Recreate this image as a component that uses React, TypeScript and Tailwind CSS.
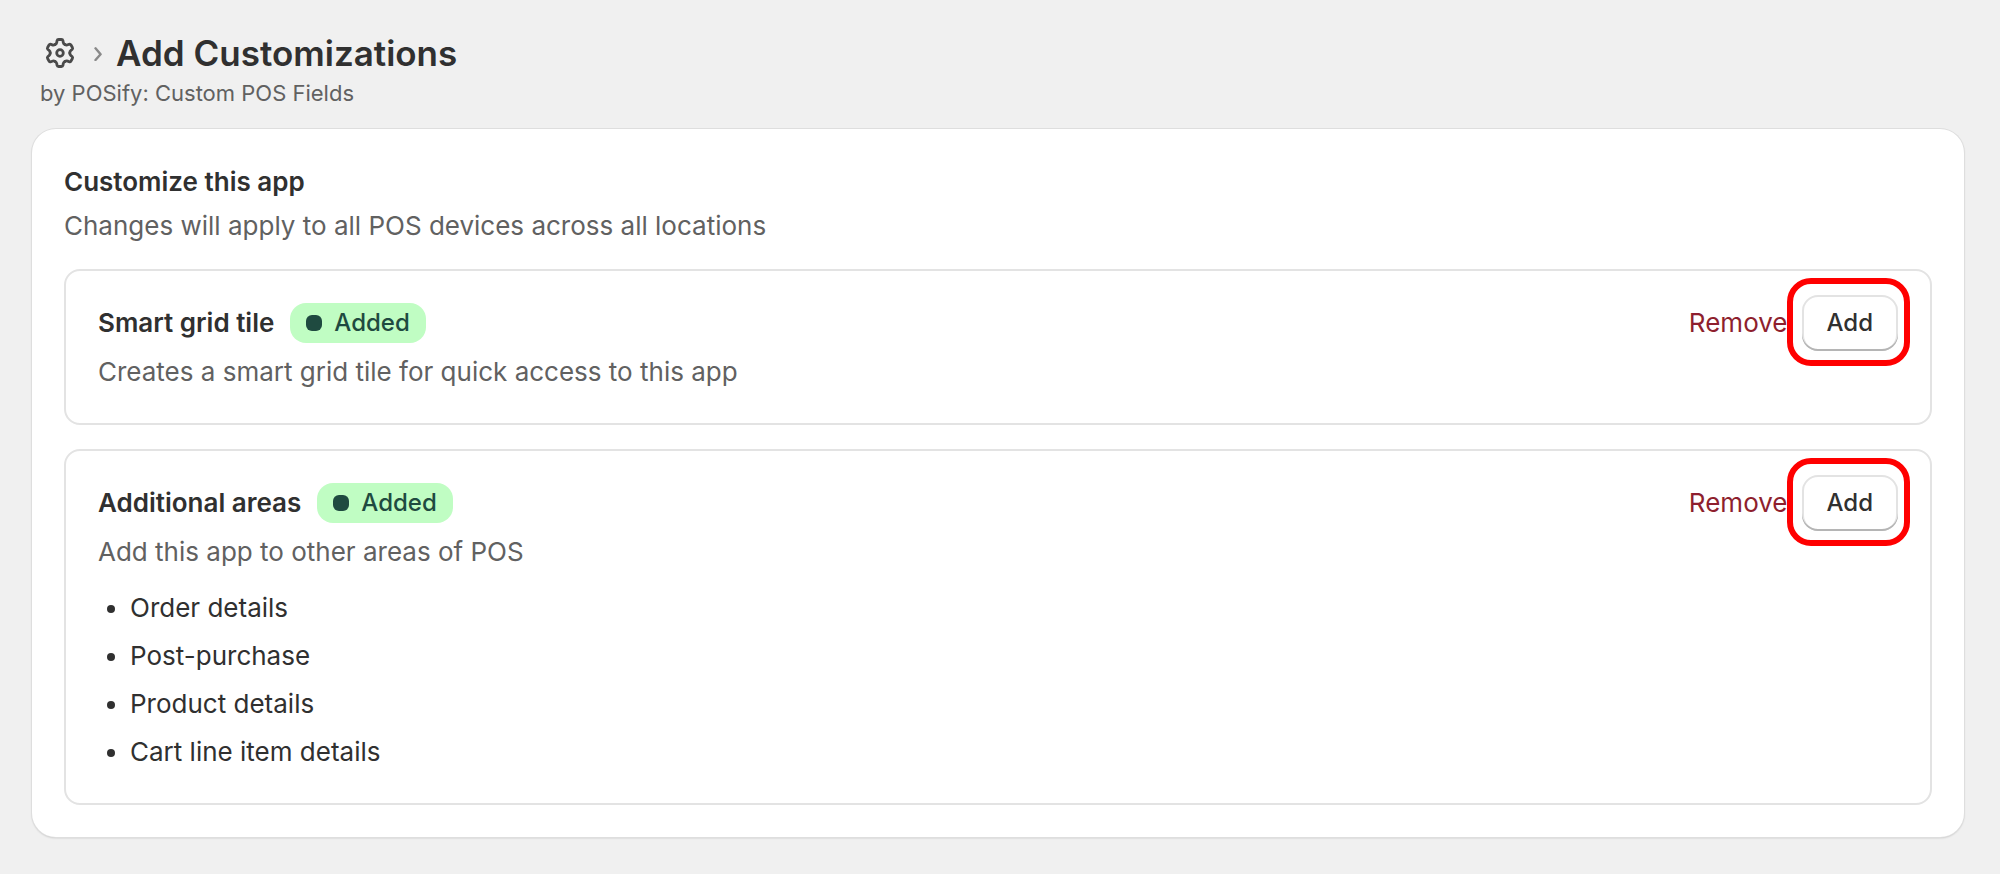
import type { ReactNode } from 'react';

const AREAS = ['Order details', 'Post-purchase', 'Product details', 'Cart line item details'];

const TEETH = [0, 60, 120, 180, 240, 300];

function GearIcon() {
  return (
    <svg viewBox="-16 -16 32 32" className="size-8" fill="none" stroke="currentColor" strokeWidth="2.8" strokeLinecap="round" strokeLinejoin="round" aria-hidden="true">
      {TEETH.map(angle => (
        <path
          key={angle}
          transform={`rotate(${angle})`}
          d="M-4.9 -8.49Q-3.4 -9.3 -3.2 -10.8L-3 -12.2Q-2.7 -13.5 -1.4 -13.5H1.4Q2.7 -13.5 3 -12.2L3.2 -10.8Q3.4 -9.3 4.9 -8.49"
        />
      ))}
      <circle r="3.3" />
    </svg>
  );
}

function ChevronIcon() {
  return (
    <svg viewBox="0 0 10 16" className="h-4 w-[10px] text-[#8a8a8a]" fill="none" stroke="currentColor" strokeWidth="2.4" strokeLinecap="round" strokeLinejoin="round" aria-hidden="true">
      <path d="M2.5 3.3L7.6 9.3L2.5 15" />
    </svg>
  );
}

function AddedBadge() {
  return (
    <span className="inline-flex h-10 items-center gap-3 rounded-2xl bg-[#c0fdc3] px-4 text-2xl font-medium text-[#1f4a40]">
      <span className="size-4 rounded-md bg-current" />
      Added
    </span>
  );
}

function ExtensionCard({ title, description, children }: { title: string; description: string; children?: ReactNode }) {
  return (
    <section className="rounded-2xl border-2 border-[#e3e3e3] px-8 pt-6 pb-[30px]">
      <div className="flex h-14 items-center justify-between">
        <div className="flex items-center gap-4">
          <h3 className="font-semibold">{title}</h3>
          <AddedBadge />
        </div>
        <div className="flex items-center gap-[14px]">
          <button type="button" className="text-[#8e1f2e]">Remove</button>
          <div className="relative">
            <button
              type="button"
              className="block h-14 rounded-2xl bg-white px-[25px] text-2xl font-medium shadow-[inset_0_-2px_0_#b5b5b5,inset_0_0_0_2px_#e3e3e3]"
            >
              Add
            </button>
            <span className="pointer-events-none absolute -top-[17px] -right-3 -bottom-[15px] -left-[15px] rounded-3xl border-6 border-[#ff0000]" />
          </div>
        </div>
      </div>
      <p className="text-[#616161]">{description}</p>
      {children}
    </section>
  );
}

export default function App() {
  return (
    <main className="min-h-screen bg-[#f0f0f0] pt-[30px] pr-9 pb-9 pl-8 font-['Inter',sans-serif] text-[26px] leading-[42px] text-[#303030]">
      <header className="px-2 pb-[19px]">
        <div className="flex h-[46px] items-center px-1">
          <a href="#settings" aria-label="Settings" className="text-[#4a4a4a]">
            <GearIcon />
          </a>
          <span className="pr-[13px] pl-[17px]">
            <ChevronIcon />
          </span>
          <h1 className="text-[35px] leading-[46px] font-semibold">Add Customizations</h1>
        </div>
        <p className="text-[22px] leading-[34px] text-[#616161]">by POSify: Custom POS Fields</p>
      </header>

      <div className="rounded-3xl bg-white p-8 shadow-[0_0_0_1px_#dedede,0_1px_2px_#b8b8b8]">
        <h2 className="font-semibold">Customize this app</h2>
        <p className="mt-[2px] text-[#616161]">Changes will apply to all POS devices across all locations</p>

        <div className="mt-[22px] flex flex-col gap-6">
          <ExtensionCard title="Smart grid tile" description="Creates a smart grid tile for quick access to this app" />
          <ExtensionCard title="Additional areas" description="Add this app to other areas of POS">
            <ul className="mt-[14px] flex list-disc flex-col gap-[6px] pl-8">
              {AREAS.map(area => (
                <li key={area}>{area}</li>
              ))}
            </ul>
          </ExtensionCard>
        </div>
      </div>
    </main>
  );
}
